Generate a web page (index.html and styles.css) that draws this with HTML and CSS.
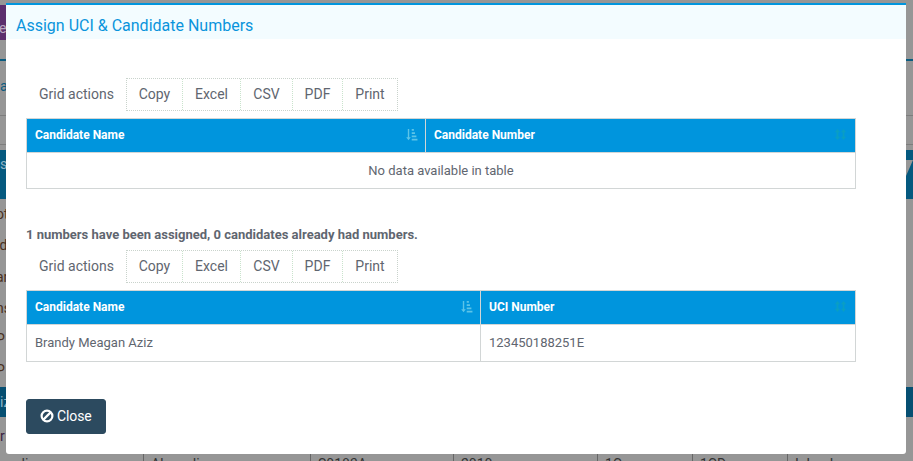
FILE: index.html
```html
<!DOCTYPE html>
<html lang="en">
<head>
<meta charset="utf-8">
<title>Assign UCI &amp; Candidate Numbers</title>
<link rel="stylesheet" href="styles.css">
</head>
<body>
<div class="page">
  <div class="bg-top"><span class="bg-e">e</span></div>
  <div class="bg-rule"></div>
  <div class="bg-link">a</div>
  <div class="bg-line bg-line-a"></div>
  <div class="bg-line bg-line-b"></div>
  <div class="bg-band bg-band-a"><span>s</span><i class="notch"></i></div>
  <div class="bg-rows">
    <div>ot</div><div>ld</div><div>ar</div><div>ns</div><div>P</div><div>P</div>
  </div>
  <div class="bg-band bg-band-b"><span>iz</span></div>
  <div class="bg-row-r">r</div>
  <div class="bg-table">
    <span class="c0">di</span><span class="c1">Abourdi</span><span class="c2">S0183A</span><span class="c3">2010</span><span class="c4">1C</span><span class="c5">1CD</span><span class="c6">Inland</span>
  </div>
</div>

<div class="modal">
  <header class="modal-head"><h4>Assign UCI &amp; Candidate Numbers</h4></header>
  <div class="modal-body">
    <div class="toolbar">
      <span class="toolbar-label">Grid actions</span>
      <div class="btns"><span class="b-copy">Copy</span><span class="b-excel">Excel</span><span class="b-csv">CSV</span><span class="b-pdf">PDF</span><span class="b-print">Print</span></div>
    </div>
    <table class="grid grid-a">
      <thead>
        <tr>
          <th class="col-a">Candidate Name
            <svg class="sort" viewBox="0 0 12 12"><path d="M2.6 1h1.3v7.6H5.4L3.25 11.4 1.1 8.6h1.5zM6.2 1h2v1.6h-2zM6.2 4h3v1.6h-3zM6.2 7h4.3v1.6H6.2zM6.2 10h5.3v1.6H6.2z"/></svg>
          </th>
          <th>Candidate Number
            <svg class="sort sort-off" viewBox="0 0 12 12"><path d="M3.2 1l2.4 3H4v4h1.6L3.2 11 .8 8h1.6V4H.8zM8.8 1l2.4 3H9.6v4h1.6L8.8 11 6.4 8H8V4H6.4z"/></svg>
          </th>
        </tr>
      </thead>
      <tbody><tr><td colspan="2" class="empty">No data available in table</td></tr></tbody>
    </table>

    <p class="note">1 numbers have been assigned, 0 candidates already had numbers.</p>

    <div class="toolbar">
      <span class="toolbar-label">Grid actions</span>
      <div class="btns"><span class="b-copy">Copy</span><span class="b-excel">Excel</span><span class="b-csv">CSV</span><span class="b-pdf">PDF</span><span class="b-print">Print</span></div>
    </div>
    <table class="grid grid-b">
      <thead>
        <tr>
          <th class="col-b">Candidate Name
            <svg class="sort" viewBox="0 0 12 12"><path d="M2.6 1h1.3v7.6H5.4L3.25 11.4 1.1 8.6h1.5zM6.2 1h2v1.6h-2zM6.2 4h3v1.6h-3zM6.2 7h4.3v1.6H6.2zM6.2 10h5.3v1.6H6.2z"/></svg>
          </th>
          <th>UCI Number
            <svg class="sort sort-off" viewBox="0 0 12 12"><path d="M3.2 1l2.4 3H4v4h1.6L3.2 11 .8 8h1.6V4H.8zM8.8 1l2.4 3H9.6v4h1.6L8.8 11 6.4 8H8V4H6.4z"/></svg>
          </th>
        </tr>
      </thead>
      <tbody><tr><td>Brandy Meagan Aziz</td><td>123450188251E</td></tr></tbody>
    </table>

    <button class="close" type="button">
      <svg viewBox="0 0 14 14"><circle cx="7" cy="7" r="5.4"/><path d="M3.4 10.6 10.6 3.4"/></svg>
      <span class="close-label">Close</span>
    </button>
  </div>
</div>
</body>
</html>
```

FILE: styles.css
```css
* { box-sizing: border-box; }
html, body { margin: 0; height: 461px; overflow: hidden; }
body {
  background: #969696;
  font-family: Roboto, "Liberation Sans", sans-serif;
  font-size: 14px;
  color: #5f6670;
  position: relative;
}

/* darkened page behind the dialog */
.page { height: 461px; overflow: hidden; color: #3a2c44; font-size: 14px; }
.bg-top { width: 100px; height: 40px; padding-top: 19px; background: linear-gradient(#969696 5px, #5c2f6e 5px); line-height: 18px; color: #b9a7c1; }
.bg-e { margin-left: -1px; font-size: 14px; }
.bg-rule { height: 2px; margin-top: 19px; background: #0a5c80; }
.bg-link { height: 20px; margin-top: 15px; line-height: 20px; color: #0a5c80; }
.bg-line { height: 1px; background: #7d7d7d; }
.bg-line-a { margin-top: 19px; }
.bg-line-b { margin-top: 28px; }
.bg-band { position: relative; background: #05597f; color: #8fb4c6; overflow: hidden; }
.bg-band-a { height: 49px; margin-top: 5px; line-height: 28px; }
.bg-band-b { height: 30px; line-height: 30px; background: #064f72; }
.notch { position: absolute; right: 0; top: 10px; width: 0; height: 0; border-top: 16px solid #969696; border-right: 7px solid transparent; }
.bg-rows { height: 188px; }
.bg-rows div { height: 31.3px; line-height: 31.3px; margin-left: -4px; color: #4a3020; }
.bg-row-r { height: 38px; line-height: 38px; color: #3a2040; }
.bg-table { position: relative; height: 6px; }
.bg-table span { position: absolute; top: -6px; padding: 6px 0 0 7px; height: 12px; line-height: 18px; color: #333; border-left: 1px solid #666; }
.c0 { left: 10px; border-left: 0 !important; }
.c1 { left: 143px; }
.c2 { left: 310px; }
.c3 { left: 453px; }
.c4 { left: 597px; }
.c5 { left: 692px; }
.c6 { left: 787px; }

/* dialog */
.modal {
  position: absolute;
  left: 6px; top: 3px;
  width: 900px; height: 451px;
  background: #fff;
  border-top: 2px solid #0095dd;
  border-radius: 0 0 3px 3px;
}
.modal-head { height: 34px; padding-left: 10px; background: #f3fcff; }
.modal-head h4 { margin: 0; font-size: 16px; font-weight: 400; line-height: 42px; color: #0a94dc; }
.modal-body { padding: 39px 50px 0 20px; }

.toolbar { display: flex; height: 33px; align-items: stretch; }
.toolbar-label { width: 100px; padding-left: 13px; line-height: 33px; }
.btns { display: flex; border: 1px dotted #c9d3cc; }
.btns span { display: block; line-height: 31px; text-align: center; border-left: 1px dotted #c9e3cc; }
.btns span:first-child { border-left: 0; }
.b-copy { width: 55px; }
.b-excel { width: 58px; }
.b-csv { width: 52px; }
.b-pdf { width: 50px; }
.b-print { width: 55px; }

.grid { width: 830px; border-collapse: collapse; table-layout: fixed; margin-top: 7px; }
.grid th {
  position: relative;
  height: 34px;
  padding: 0 8px 2px;
  background: #0095dd;
  color: #fff;
  font-size: 12px;
  font-weight: 700;
  text-align: left;
  border: 1px solid #d2d6d6;
}
.grid th + th { border-left-color: #e6eef2; }
.grid td { height: 36px; padding: 0 8px; font-size: 13px; border: 1px solid #d2d6d6; }
.grid-b td { height: 37px; padding-bottom: 2px; }
.col-a { width: 399px; }
.col-b { width: 454px; }
.empty { text-align: center; }
.sort { position: absolute; right: 7px; top: 9px; width: 13px; height: 13px; fill: #5cc4e8; }
.sort-off { right: 8px; fill: #0a9ec4; }

.note { margin: 38px 0 8px; padding-top: 1px; font-size: 13px; line-height: 14px; font-weight: 700; }

.close {
  display: flex;
  align-items: center;
  gap: 3px;
  width: 80px; height: 35px;
  margin-top: 37px;
  padding: 0 0 2px 13px;
  border: 1px solid #2c4a5f;
  border-radius: 3px;
  background: #2c4a5f;
  color: #fff;
  font: 14px Roboto, "Liberation Sans", sans-serif;
}
.close svg { width: 14px; height: 14px; fill: none; stroke: #fff; stroke-width: 2.2; }
.close-label { letter-spacing: -.1px; }
```
